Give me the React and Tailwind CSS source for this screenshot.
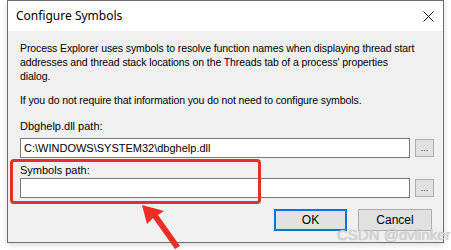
import React from 'react';

const uiFont = { fontFamily: '"Liberation Sans", Arial, sans-serif' };

const PathRow = ({ label, value, gap }) => (
  <div className="flex flex-col">
    <div className="h-[14px] leading-[14px]">{label}</div>
    <div className={`flex items-start ${gap}`}>
      <div className="h-[20px] w-[390px] border border-[#7a7a7a] bg-white pl-[3px] leading-[18px]">
        {value}
      </div>
      <button className="ml-[5px] mt-[1px] flex h-[18px] w-[19px] items-end justify-center border border-[#adadad] bg-[#e1e1e1] pb-[3px] text-[9px] leading-none tracking-normal text-[#333]">
        ...
      </button>
    </div>
  </div>
);

export default function App() {
  return (
    <div className="relative h-[250px] w-[451px] overflow-hidden bg-white text-[11px] text-black" style={uiFont}>
      {/* Dialog window */}
      <div className="ml-[7px] flex h-[243px] w-[437px] flex-col border border-[#6e6e6e] bg-[#f0f0f0] shadow-[0_2px_6px_rgba(0,0,0,0.15)]">
        {/* Title bar */}
        <div className="flex h-[30px] items-center justify-between bg-white pl-[8px] pr-[9px]">
          <span className="text-[12px] text-black" style={{ fontFamily: '"Noto Sans", "Open Sans", sans-serif' }}>
            Configure Symbols
          </span>
          <svg width="11" height="11" viewBox="0 0 11 11" className="mt-[1px]">
            <path d="M0.5 0.5 L10.5 10.5 M10.5 0.5 L0.5 10.5" stroke="#111" strokeWidth="1" fill="none" />
          </svg>
        </div>

        {/* Body */}
        <div className="flex flex-col pl-[12px] pt-[10px] text-[10.5px] tracking-[-0.1px]">
          <p className="w-[396px] leading-[14px]">
            Process Explorer uses symbols to resolve function names when displaying thread start addresses and thread stack locations on the Threads tab of a process' properties dialog.
          </p>
          <p className="mt-[10px] leading-[14px]">
            If you do not require that information you do not need to configure symbols.
          </p>
          <div className="mt-[12px] text-[11px] tracking-normal">
            <PathRow label="Dbghelp.dll path:" value="C:\WINDOWS\SYSTEM32\dbghelp.dll" gap="mt-[5px]" />
          </div>
          <div className="mt-[5px] text-[11px] tracking-normal">
            <PathRow label="Symbols path:" value="" gap="mt-[1px]" />
          </div>
          <div className="mt-[11px] flex justify-end pr-[11px] tracking-normal">
            <button className="h-[22px] w-[73px] border-2 border-[#0078d7] bg-[#e1e1e1] text-[12px]">OK</button>
            <button className="ml-[11px] h-[22px] w-[74px] border border-[#adadad] bg-[#e1e1e1] text-[12px]">Cancel</button>
          </div>
        </div>
      </div>

      {/* Red highlight box */}
      <div className="absolute left-[10px] top-[159px] h-[45px] w-[251px] rounded-[4px] border-[3px] border-[#e2302d]" />

      {/* Red arrow */}
      <svg className="absolute left-0 top-0" width="451" height="250" viewBox="0 0 451 250">
        <path d="M142 205 L164 211 L158 215 L180 246 L175 249 L153 218 L147 224 Z" fill="#ee2e24" />
      </svg>

      {/* Watermark */}
      <div className="absolute left-[337px] top-[226px] text-[15px] leading-[18px] text-[#d2d2d2]" style={{ textShadow: '0 0 1px rgba(120,120,120,0.45)' }}>
        CSDN @dvlinker
      </div>
    </div>
  );
}
